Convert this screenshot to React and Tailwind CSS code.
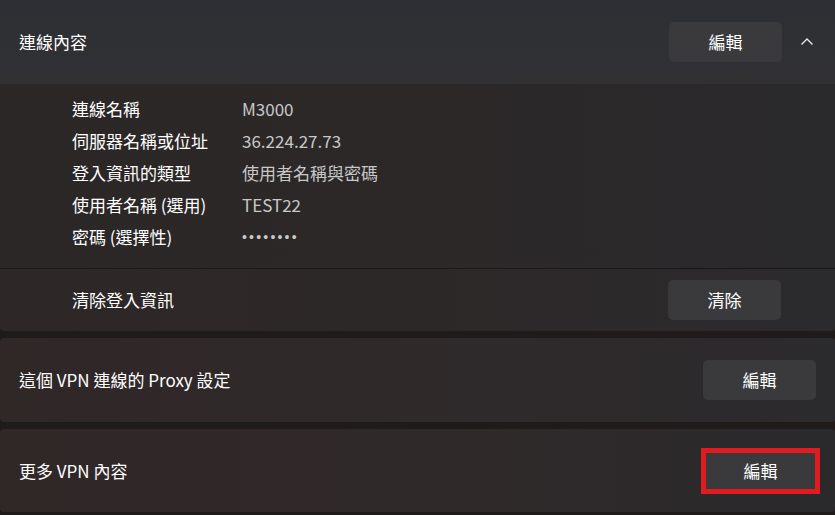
const font = { fontFamily: '"Segoe UI", "Noto Sans CJK TC", "Noto Sans", sans-serif' };

const details = [
  ["連線名稱", "M3000"],
  ["伺服器名稱或位址", "36.224.27.73"],
  ["登入資訊的類型", "使用者名稱與密碼"],
  ["使用者名稱 (選用)", "TEST22"],
  ["密碼 (選擇性)", null],
];

const Btn = ({ children, className = "" }) => (
  <button
    className={
      "h-10 rounded-[5px] bg-[#3a3a3c] text-white text-[17px] flex items-center justify-center " +
      className
    }
  >
    {children}
  </button>
);

export default function App() {
  return (
    <div
      style={font}
      className="w-[835px] h-[515px] bg-[#1f1b1b] text-white overflow-hidden flex flex-col gap-[7px]"
    >
      <div className="rounded-b-[4px] overflow-hidden">
        <div className="h-[84px] bg-gradient-to-b from-[#2d2f34] to-[#313134] flex items-center pl-[19px] pr-[20px]">
          <span className="text-[17px] flex-1">連線內容</span>
          <Btn className="w-[113px]">編輯</Btn>
          <svg width="16" height="16" viewBox="0 0 16 16" className="ml-[17px]">
            <path d="M2.5 10.5 8 5l5.5 5.5" fill="none" stroke="#e8e8e8" strokeWidth="1.4" />
          </svg>
        </div>
        <div className="bg-gradient-to-r from-[#2c2727] via-[#2c2828] to-[#2a292c] pt-[9px] pb-[15px] pl-[72px]">
          {details.map(([k, v]) => (
            <div key={k} className="h-[32px] flex items-center text-[17px]">
              <span className="w-[170px] text-white">{k}</span>
              {v ? (
                <span className="text-[#c8c8c8]">{v}</span>
              ) : (
                <span
                  className="text-[#c8c8c8] text-[14px] tracking-[2.2px]"
                  style={{ fontFamily: '"Liberation Sans", sans-serif' }}
                >
                  ••••••••
                </span>
              )}
            </div>
          ))}
        </div>
        <div className="h-px bg-[#1b1818]" />
        <div className="h-[62px] bg-gradient-to-r from-[#2e2727] via-[#2d2828] to-[#2b2a2d] flex items-center pl-[72px] pr-[54px]">
          <span className="text-[17px] flex-1">清除登入資訊</span>
          <Btn className="w-[113px]">清除</Btn>
        </div>
      </div>

      <div className="h-[84px] rounded-[4px] bg-gradient-to-r from-[#302727] via-[#2f292a] to-[#2b2a2d] flex items-center pl-[19px] pr-[19px]">
        <span className="text-[17px] flex-1">這個 VPN 連線的 Proxy 設定</span>
        <Btn className="w-[113px]">編輯</Btn>
      </div>

      <div className="h-[83px] rounded-[4px] bg-gradient-to-r from-[#302727] via-[#302929] to-[#2a292c] flex items-center pl-[19px] pr-[15px]">
        <span className="text-[17px] flex-1">更多 VPN 內容</span>
        <div className="border-[5px] border-[#e21b1f] p-0">
          <Btn className="w-[109px] h-[36px] rounded-none">編輯</Btn>
        </div>
      </div>
    </div>
  );
}
